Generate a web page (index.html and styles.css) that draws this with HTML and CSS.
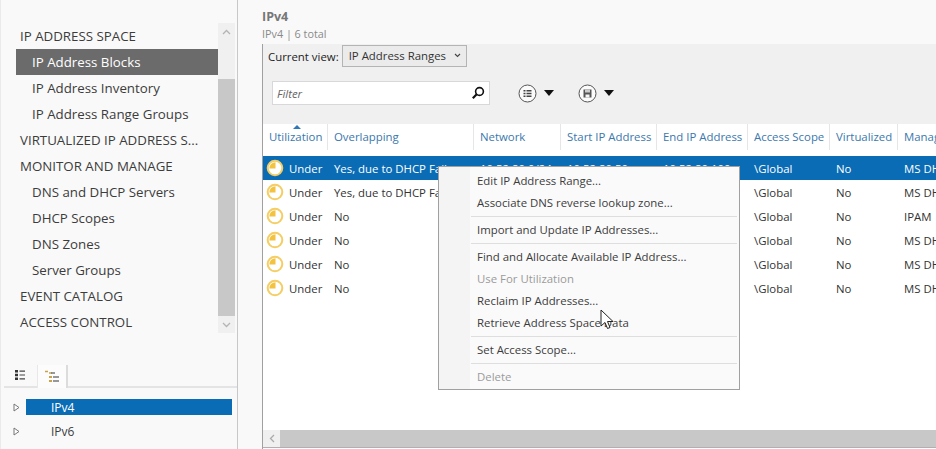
FILE: index.html
```html
<!DOCTYPE html>
<html lang="en">
<head>
    <meta charset="UTF-8">
    <title>IPv4</title>
    <link rel="stylesheet" href="styles.css">
</head>
<body>
    <div class="app">
        <div class="side">
            <div class="nav-wrap">
                <ul class="nav">
                    <li class="top">IP ADDRESS SPACE</li>
                    <li class="sub active">IP Address Blocks</li>
                    <li class="sub">IP Address Inventory</li>
                    <li class="sub">IP Address Range Groups</li>
                    <li class="top">VIRTUALIZED IP ADDRESS S...</li>
                    <li class="top">MONITOR AND MANAGE</li>
                    <li class="sub">DNS and DHCP Servers</li>
                    <li class="sub">DHCP Scopes</li>
                    <li class="sub">DNS Zones</li>
                    <li class="sub">Server Groups</li>
                    <li class="top">EVENT CATALOG</li>
                    <li class="top">ACCESS CONTROL</li>
                </ul>
                <div class="vscroll">
                    <div class="vbtn"><svg width="9" height="6" viewBox="0 0 9 6"><path d="M1 5l3.500-3.500L8 5" fill="none" stroke="#b4b4b4" stroke-width="1.300"/></svg></div>
                    <div class="vthumb"></div>
                    <div class="vbtn"><svg width="9" height="6" viewBox="0 0 9 6"><path d="M1 1l3.500 3.500L8 1" fill="none" stroke="#b4b4b4" stroke-width="1.300"/></svg></div>
                </div>
            </div>
            <div class="tabs">
                <div class="tab">
                    <svg width="12" height="12" viewBox="0 0 12 12"><path d="M1 1h3v2.400H1zM1 4.800h3v2.400H1zM1 8.600h3V11H1z" fill="#333"/><path d="M5.500 2.200H11M5.500 6H11M5.500 9.800H11" stroke="#444" stroke-width="1.200"/></svg>
                </div>
                <div class="tab on">
                    <svg width="16" height="14" viewBox="0 0 16 14"><path d="M1 1.500h3M5 3h3" stroke="#c9a24a" stroke-width="1.500"/><path d="M5 6h3v2H5zM5 10h3v2H5z" fill="#c9a24a"/><path d="M9 7h6M9 11h6M7 3h4" stroke="#777" stroke-width="1.300"/></svg>
                </div>
            </div>
            <div class="tree">
                <div class="tree-row">
                    <svg class="arrow" width="7" height="9" viewBox="0 0 7 9"><path d="M1 1l5 3.500L1 8z" fill="#fff" stroke="#777" stroke-width="1"/></svg>
                    <span class="tree-label sel">IPv4</span>
                </div>
                <div class="tree-row">
                    <svg class="arrow" width="7" height="9" viewBox="0 0 7 9"><path d="M1 1l5 3.500L1 8z" fill="#fff" stroke="#777" stroke-width="1"/></svg>
                    <span class="tree-label">IPv6</span>
                </div>
            </div>
        </div>

        <div class="main">
            <div class="head">
                <h1>IPv4</h1>
                <p>IPv4 | 6 total</p>
            </div>
            <div class="panel">
                <div class="toolbar">
                    <div class="view-row">
                        <span>Current view:</span>
                        <div class="select">IP Address Ranges
                            <svg width="7" height="5" viewBox="0 0 7 5"><path d="M1 1l2.500 2.500L6 1" fill="none" stroke="#444" stroke-width="1.100"/></svg>
                        </div>
                    </div>
                    <div class="filter-row">
                        <div class="filter">
                            <span>Filter</span>
                            <svg width="14" height="14" viewBox="0 0 14 14"><circle cx="8.500" cy="5.500" r="3.900" fill="none" stroke="#111" stroke-width="1.600"/><path d="M5.700 8.300L1.800 12.200" stroke="#111" stroke-width="2.200"/></svg>
                        </div>
                        <div class="tool first">
                            <svg width="19" height="19" viewBox="0 0 19 19"><circle cx="9.500" cy="9.500" r="8.500" fill="#fbfbfb" stroke="#555" stroke-width="1"/><path d="M5.500 6h2v1.600h-2zM5.500 8.700h2v1.600h-2zM5.500 11.400h2V13h-2z" fill="#444"/><path d="M8.500 6.800h5M8.500 9.500h5M8.500 12.200h5" stroke="#444" stroke-width="1.500"/></svg>
                            <span class="caret"></span>
                        </div>
                        <div class="tool">
                            <svg width="19" height="19" viewBox="0 0 19 19"><circle cx="9.500" cy="9.500" r="8.500" fill="#fbfbfb" stroke="#555" stroke-width="1"/><path d="M5.500 5.500h8v8h-8z" fill="#555"/><path d="M7 5.500h5v3H7z" fill="#ccc"/><path d="M7.500 10.500h4v3h-4z" fill="#f4f4f4"/></svg>
                            <span class="caret"></span>
                        </div>
                    </div>
                </div>
                <div class="grid">
                    <div class="row header">
                        <div class="hcell sorted">Utilization</div>
                        <div class="hcell">Overlapping</div>
                        <div class="hcell">Network</div>
                        <div class="hcell">Start IP Address</div>
                        <div class="hcell">End IP Address</div>
                        <div class="hcell">Access Scope</div>
                        <div class="hcell">Virtualized</div>
                        <div class="hcell">Managed by</div>
                    </div>
                    <div class="rows" id="rows"></div>
                    <div class="hscroll">
                        <div class="hbtn"><svg width="6" height="9" viewBox="0 0 6 9"><path d="M5 1L1.500 4.500 5 8" fill="none" stroke="#aaa" stroke-width="1.300"/></svg></div>
                        <div class="hthumb"></div>
                    </div>
                </div>
            </div>
        </div>
    </div>

    <ul class="menu">
        <li>Edit IP Address Range...</li>
        <li>Associate DNS reverse lookup zone...</li>
        <li class="sep"></li>
        <li>Import and Update IP Addresses...</li>
        <li class="sep"></li>
        <li>Find and Allocate Available IP Address...</li>
        <li class="off">Use For Utilization</li>
        <li>Reclaim IP Addresses...</li>
        <li>Retrieve Address Space Data</li>
        <li class="sep"></li>
        <li>Set Access Scope...</li>
        <li class="sep"></li>
        <li class="off">Delete</li>
    </ul>

    <svg class="cursor" width="15" height="22" viewBox="0 0 15 22"><path d="M1 1v16l4-3.500 2.500 6 2.500-1-2.500-6H13z" fill="#fff" stroke="#222" stroke-width="1"/></svg>

    <script>
        const data = [
            ['Yes, due to DHCP Failover', '10.52.80.0/24', '10.52.80.50', '10.52.80.100', 'MS DHCP'],
            ['Yes, due to DHCP Failover', '10.52.81.0/24', '10.52.81.50', '10.52.81.100', 'MS DHCP'],
            ['No', '10.52.82.0/24', '10.52.82.50', '10.52.82.100', 'IPAM'],
            ['No', '10.52.83.0/24', '10.52.83.50', '10.52.83.100', 'MS DHCP'],
            ['No', '10.52.84.0/24', '10.52.84.50', '10.52.84.100', 'MS DHCP'],
            ['No', '10.52.85.0/24', '10.52.85.50', '10.52.85.100', 'MS DHCP']
        ];
        const icon = '<svg width="18" height="18" viewBox="0 0 18 18"><circle cx="9" cy="9" r="7.300" fill="#fff" stroke="#f5cd62" stroke-width="2"/><path d="M9.500 9.500V3.300A6.200 6.200 0 0 0 3.300 9.500z" fill="#f3c23e"/></svg>';

        const rows = document.getElementById('rows');
        data.forEach((item, i) => {
            const row = document.createElement('div');
            row.className = i === 0 ? 'row item sel' : 'row item';
            row.innerHTML = '<div class="cell util">' + icon + '<span>Under</span></div>'
                + '<div class="cell">' + item[0] + '</div>'
                + '<div class="cell">' + item[1] + '</div>'
                + '<div class="cell">' + item[2] + '</div>'
                + '<div class="cell">' + item[3] + '</div>'
                + '<div class="cell">\\Global</div>'
                + '<div class="cell">No</div>'
                + '<div class="cell">' + item[4] + '</div>';
            rows.appendChild(row);
        });
    </script>
</body>
</html>
```
FILE: styles.css
```css
* {
    box-sizing: border-box;
}
html, body {
    margin: 0;
    height: 100%;
    overflow: hidden;
}
body {
    font-family: "Open Sans", "Noto Sans", Arial, sans-serif;
    font-size: 11.400px;
    color: #3c3c3c;
    background: #f9f9f9;
}
ul {
    list-style: none;
    margin: 0;
    padding: 0;
}
.app {
    display: flex;
    height: 449px;
}

/* left pane */
.side {
    width: 238px;
    flex: none;
    padding: 23px 0 0 2px;
    border-left: 1px solid #eaeaea;
    border-right: 1px solid #c8c8c8;
}
.nav-wrap {
    display: flex;
    height: 310px;
    padding-left: 13px;
}
.nav {
    width: 202px;
    flex: none;
    font-size: 13.300px;
}
.nav li {
    height: 26px;
    line-height: 26px;
    white-space: nowrap;
    overflow: hidden;
}
.nav .top {
    padding-left: 4px;
}
.nav .sub {
    padding-left: 16px;
}
.nav .active {
    background: #6b6b6b;
    color: #fff;
}
.vscroll {
    width: 17px;
    display: flex;
    flex-direction: column;
    background: #f0f0f0;
}
.vbtn {
    height: 17px;
    display: flex;
    align-items: center;
    justify-content: center;
}
.vscroll .vbtn:first-child {
    margin-bottom: 39px;
}
.vthumb {
    flex: 1;
    background: #c8c8c8;
}
.tabs {
    display: flex;
    height: 23px;
    margin-top: 32px;
    margin-left: 1px;
    border-bottom: 2px solid #e4e4e4;
}
.tab {
    width: 33px;
    display: flex;
    align-items: center;
    justify-content: center;
    padding: 0 2px 2px 0;
}
.tab.on {
    width: 31px;
    height: 23px;
    padding: 0;
    background: #fcfcfc;
    border-left: 1px solid #e8e8e8;
    border-right: 2px solid #dcdcdc;
}
.tree {
    padding-top: 11px;
}
.tree-row {
    display: flex;
    align-items: center;
    height: 16px;
    margin-bottom: 8px;
    padding-left: 10px;
}
.arrow {
    flex: none;
    margin-right: 6px;
}
.tree-label {
    width: 206px;
    height: 16px;
    line-height: 18px;
    padding-left: 25px;
    font-size: 12px;
}
.tree-label.sel {
    background: #0a6cb5;
    color: #fff;
}

/* right pane */
.main {
    flex: 1;
    min-width: 0;
    padding-left: 24px;
    display: flex;
    flex-direction: column;
}
.head {
    height: 44px;
    padding-top: 9px;
}
.head h1 {
    margin: 0;
    font-size: 12.500px;
    line-height: 16px;
    font-weight: 700;
    color: #777;
}
.head p {
    margin: 0;
    font-size: 10.800px;
    line-height: 18px;
    color: #8a8a8a;
}
.panel {
    flex: 1;
    border-left: 1px solid #a0a0a0;
    display: flex;
    flex-direction: column;
    min-height: 0;
}
.toolbar {
    height: 80px;
    background: #f0f0f0;
    padding: 1px 0 0 5px;
}
.view-row {
    display: flex;
    align-items: center;
    gap: 3px;
    height: 22px;
    color: #222;
}
.select {
    display: flex;
    align-items: center;
    justify-content: space-between;
    width: 125px;
    height: 22px;
    padding: 0 5px 2px 6px;
    background: #ebebeb;
    border: 1px solid #b4b4b4;
    color: #333;
}
.filter-row {
    display: flex;
    align-items: center;
    margin-top: 14px;
    padding-left: 4px;
}
.filter {
    display: flex;
    align-items: center;
    justify-content: space-between;
    width: 218px;
    height: 24px;
    padding: 0 4px;
    background: #fff;
    border: 1px solid #d8d8d8;
    font-style: italic;
    color: #666;
}
.tool {
    display: flex;
    align-items: center;
    gap: 7px;
    margin-left: 24px;
}
.tool.first {
    margin-left: 28px;
}
.caret {
    width: 0;
    height: 0;
    border-left: 5.500px solid transparent;
    border-right: 5.500px solid transparent;
    border-top: 6px solid #111;
}

/* table */
.grid {
    flex: 1;
    background: #fff;
    display: flex;
    flex-direction: column;
    min-height: 0;
}
.row {
    display: grid;
    grid-template-columns: 65px 146px 87px 96px 91px 82px 68px 80px;
}
.header {
    height: 32px;
    flex: none;
    color: #3a78ad;
}
.hcell {
    height: 26px;
    line-height: 26px;
    padding-left: 6px;
    border-right: 1px solid #e6e6e6;
    white-space: nowrap;
    overflow: hidden;
}
.sorted {
    position: relative;
}
.sorted::before {
    content: "";
    position: absolute;
    left: 30px;
    top: 1px;
    border-left: 4px solid transparent;
    border-right: 4px solid transparent;
    border-bottom: 4px solid #2f78b8;
}
.rows {
    flex: 1;
}
.item {
    height: 24px;
    color: #333;
}
.item.sel {
    background: #0a6cb5;
    color: #fff;
}
.cell {
    height: 24px;
    padding: 1px 0 0 6px;
    line-height: 24px;
    white-space: nowrap;
    overflow: hidden;
}
.util {
    display: flex;
    align-items: center;
    gap: 5px;
    padding: 0 0 0 3px;
}
.util span {
    padding-top: 1px;
}
.hscroll {
    display: flex;
    height: 18px;
    flex: none;
    margin-bottom: 1px;
    border-bottom: 1px solid #b0b0b0;
}
.hbtn {
    width: 17px;
    display: flex;
    align-items: center;
    justify-content: center;
    background: #f0f0f0;
}
.hthumb {
    flex: 1;
    background: #c8c8c8;
}

/* context menu */
.menu {
    position: absolute;
    left: 438px;
    top: 166px;
    width: 302px;
    height: 224px;
    padding: 3px 2px 0 2px;
    background: linear-gradient(to right, #f4f4f4 31px, #fafafa 31px);
    border: 1px solid #a0a0a0;
    color: #3c3c3c;
}
.menu li {
    height: 22px;
    line-height: 22px;
    padding-left: 36px;
    white-space: nowrap;
}
.menu .sep {
    height: 1px;
    margin: 2px 0 2px 30px;
    padding: 0;
    background: #dedede;
}
.menu .off {
    color: #9a9a9a;
}
.cursor {
    position: absolute;
    left: 600px;
    top: 309px;
}
```
